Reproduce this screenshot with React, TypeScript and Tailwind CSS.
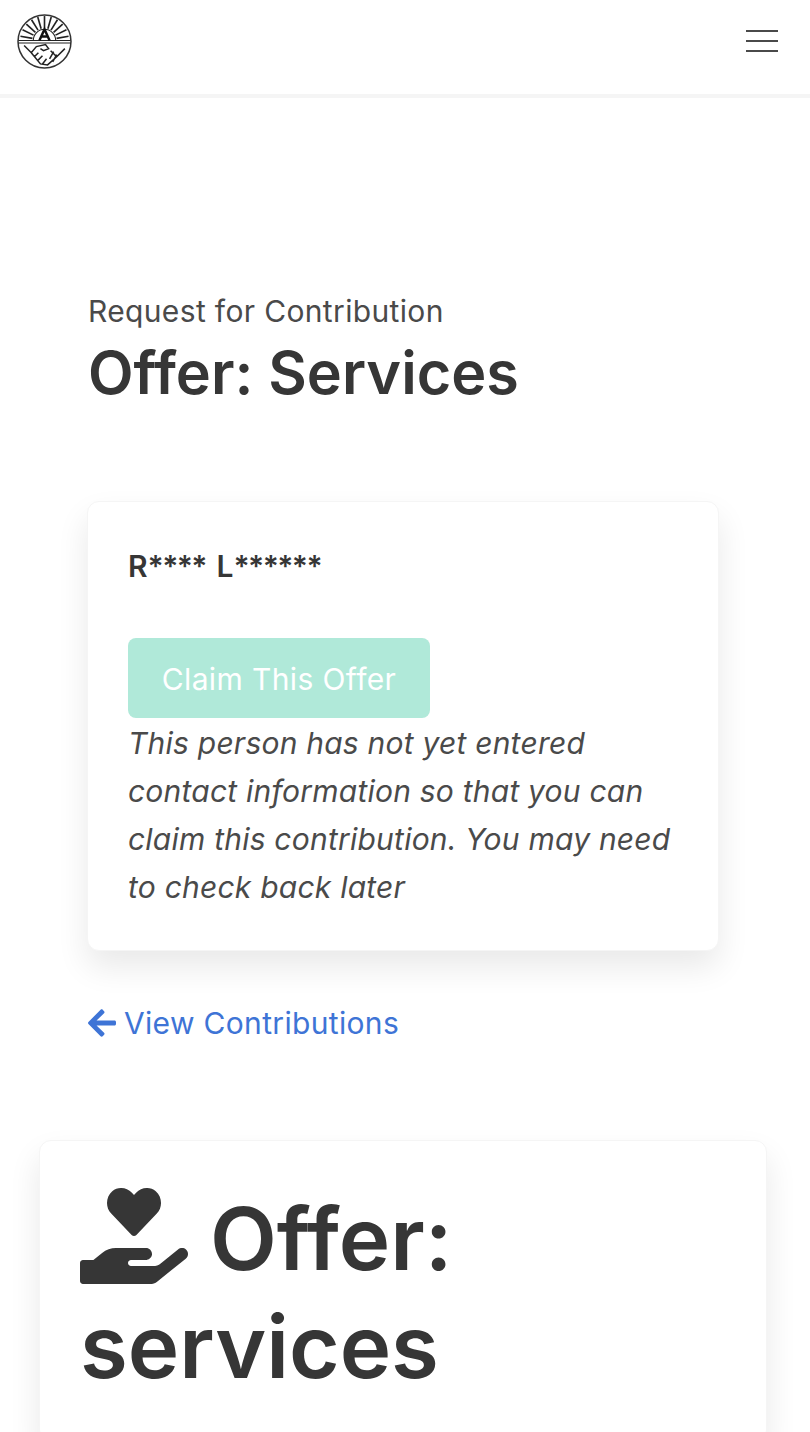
import React from "react";
import { FaArrowLeft, FaHandHoldingHeart } from "react-icons/fa";

function Logo() {
  const rays = [];
  for (let a = -80; a <= 80; a += 16) {
    rays.push(
      <line
        key={a}
        x1="27"
        y1="14"
        x2="27"
        y2="2"
        stroke="#222"
        strokeWidth="1.6"
        transform={`rotate(${a} 27 26)`}
      />
    );
  }
  return (
    <svg width="55" height="55" viewBox="0 0 54 54" className="shrink-0">
      <circle cx="27" cy="27" r="26" fill="#fff" stroke="#333" strokeWidth="1.5" />
      {rays}
      <path d="M16 26 A11 11 0 0 1 38 26" fill="#fff" stroke="#222" strokeWidth="1" />
      <line x1="1.5" y1="26" x2="52.5" y2="26" stroke="#222" strokeWidth="1" />
      <line x1="1.5" y1="28.5" x2="52.5" y2="28.5" stroke="#222" strokeWidth="1" />
      <path d="M22 26 L27 15 L32 26 M23.8 22 H30.2" fill="none" stroke="#111" strokeWidth="2.4" />
      <path
        d="M7 31 L14 38 L19 32 L28 30 L31 34 L26 36 L23 34 M14 38 L23 49 L30 50 L39 42 L47 34 M33 36 L39 42 M17 42 L21 38 M20 46 L25 41 M25 49 L29 44 M36 37 L32 44 M39 40 L35 47"
        fill="none"
        stroke="#222"
        strokeWidth="1.5"
      />
    </svg>
  );
}

export default function App() {
  return (
    <div className="h-[1432px] overflow-hidden bg-white font-['Inter',sans-serif] text-[#363636]">
      <header className="flex h-[98px] items-start justify-between border-b-4 border-[#f5f5f5] pl-[17px] pr-[32px] pt-[14px]">
        <Logo />
        <button className="mt-[16px] flex w-8 flex-col gap-2">
          <span className="block h-[2px] bg-[#4a4a4a]" />
          <span className="block h-[2px] bg-[#4a4a4a]" />
          <span className="block h-[2px] bg-[#4a4a4a]" />
        </button>
      </header>

      <main className="pt-[192px]">
        <section className="pl-[88px] pr-[92px]">
          <p className="text-[30px] leading-[42px] tracking-[0.35px] text-[#4a4a4a]">Request for Contribution</p>
          <h1 className="text-[59.3px] font-semibold leading-[81px]">Offer: Services</h1>

          <div className="-mx-px mt-[88px] rounded-xl border border-[#f5f5f5] bg-white px-10 pb-[39px] pt-[40px] shadow-[0_16px_32px_rgba(10,10,10,0.09)]">
            <p className="text-[30px] font-semibold leading-[48px] [word-spacing:3px]">
              R<span className="tracking-[-1.6px]">****</span> L<span className="tracking-[-1.6px]">******</span>
            </p>
            <button
              disabled
              className="mb-px mt-[48px] block h-[80px] w-[302px] rounded-lg bg-[#b0e9d9] pt-[2px] text-[30px] tracking-[0.38px] text-white"
            >
              Claim This Offer
            </button>
            <p className="text-[30px] italic leading-[48px] tracking-[0.22px] text-[#4a4a4a]">
              This person has not yet entered contact information so that you can claim this contribution. You may need
              to check back later
            </p>
          </div>

          <a className="mt-[48px] flex items-center gap-2 text-[30px] leading-[48px] tracking-[0.33px] text-[#3e74d6]">
            <FaArrowLeft className="h-8 w-7" />
            View Contributions
          </a>
        </section>

        <section className="ml-[39px] mr-[43px] mt-[93px] rounded-xl border border-[#f5f5f5] bg-white px-10 pb-[40px] pt-[44px] shadow-[0_16px_32px_rgba(10,10,10,0.09)]">
          <h2 className="text-[87px] font-semibold leading-[108px]">
            <FaHandHoldingHeart className="inline-block h-[96px] w-[108px] align-[-14px]" /> Offer: services
          </h2>
        </section>
      </main>
    </div>
  );
}
